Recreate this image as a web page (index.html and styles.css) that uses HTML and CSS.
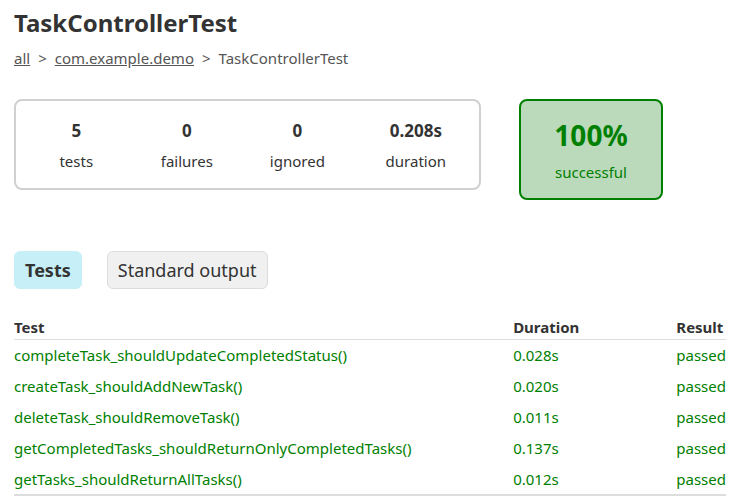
FILE: index.html
```html
<!DOCTYPE html>
<html>
<head>
<meta charset="utf-8">
<link rel="stylesheet" href="styles.css">
</head>
<body>
<div class="page">
  <h1 class="title">TaskControllerTest</h1>
  <div class="breadcrumbs">
    <a href="#">all</a><span class="sep">&gt;</span><a href="#">com.example.demo</a><span class="sep">&gt;</span><span>TaskControllerTest</span>
  </div>
  <div class="summary-row">
    <div class="summary">
      <div class="stat"><div class="num">5</div><div class="lbl">tests</div></div>
      <div class="stat"><div class="num">0</div><div class="lbl">failures</div></div>
      <div class="stat"><div class="num">0</div><div class="lbl">ignored</div></div>
      <div class="stat"><div class="num">0.208s</div><div class="lbl">duration</div></div>
    </div>
    <div class="success">
      <div class="pct">100%</div>
      <div class="slbl">successful</div>
    </div>
  </div>
  <div class="tabs">
    <div class="tab active">Tests</div>
    <div class="tab">Standard output</div>
  </div>
  <table class="tests">
    <thead>
      <tr><th class="c-test">Test</th><th class="c-dur">Duration</th><th class="c-res">Result</th></tr>
    </thead>
    <tbody>
      <tr><td>completeTask_shouldUpdateCompletedStatus()</td><td>0.028s</td><td>passed</td></tr>
      <tr><td>createTask_shouldAddNewTask()</td><td>0.020s</td><td>passed</td></tr>
      <tr><td>deleteTask_shouldRemoveTask()</td><td>0.011s</td><td>passed</td></tr>
      <tr><td>getCompletedTasks_shouldReturnOnlyCompletedTasks()</td><td>0.137s</td><td>passed</td></tr>
      <tr><td>getTasks_shouldReturnAllTasks()</td><td>0.012s</td><td>passed</td></tr>
    </tbody>
  </table>
</div>
</body>
</html>
```

FILE: styles.css
```css
html, body {
  margin: 0;
  padding: 0;
  background: #fff;
}
body {
  font-family: "Noto Sans", "Open Sans", sans-serif;
  color: #333;
  font-size: 15px;
}
.page {
  padding: 6px 12px 0 14px;
}
.title {
  margin: 0;
  font-size: 24px;
  font-weight: 700;
  line-height: 34px;
  color: #333;
}
.breadcrumbs {
  margin-top: 8px;
  font-size: 15px;
  line-height: 20px;
  color: #555;
}
.breadcrumbs a {
  color: #555;
  text-decoration: underline;
}
.sep {
  margin: 0 8px;
}
.summary-row {
  display: flex;
  align-items: flex-start;
  margin-top: 31px;
  gap: 38px;
}
.summary {
  box-sizing: border-box;
  width: 467px;
  height: 91px;
  border: 2px solid #d0d0d0;
  border-radius: 8px;
  display: flex;
  padding: 1px 0 0 5px;
  align-items: center;
}
.stat {
  width: 112px;
  text-align: center;
}
.stat:last-child {
  width: 128px;
}
.num {
  font-weight: 700;
  font-size: 17px;
  line-height: 24px;
}
.lbl {
  margin-top: 8px;
  font-size: 15px;
  line-height: 20px;
}
.success {
  box-sizing: border-box;
  width: 144px;
  height: 101px;
  border: 2px solid #008000;
  border-radius: 8px;
  background: #bbd9bb;
  color: #008000;
  display: flex;
  flex-direction: column;
  align-items: center;
  justify-content: center;
}
.pct {
  font-weight: 700;
  font-size: 28px;
  line-height: 36px;
}
.slbl {
  margin-top: 9px;
  font-size: 15px;
  line-height: 20px;
}
.tabs {
  display: flex;
  gap: 25px;
  margin-top: 51px;
}
.tab {
  box-sizing: border-box;
  height: 38px;
  padding: 0 10px;
  border: 1px solid #dcdcdc;
  border-radius: 6px;
  background: #f0f0f0;
  font-size: 18px;
  line-height: 36px;
  color: #333;
}
.tab.active {
  background: #c6eff7;
  border-color: #c6eff7;
  font-weight: 700;
}
.tests {
  width: 712px;
  margin-top: 28px;
  border-collapse: collapse;
  border-bottom: 2px solid #ddd;
}
.tests th {
  text-align: left;
  font-weight: 700;
  font-size: 15px;
  line-height: 20px;
  padding: 0 0 2px 0;
  border-bottom: 1px solid #ddd;
}
.tests td {
  font-size: 15px;
  line-height: 20px;
  height: 20px;
  padding: 5px 0 6px 0;
  color: #008000;
}
.tests tbody tr:last-child td {
  padding-bottom: 5px;
}
.c-test { width: 500px; }
.c-dur { width: 164px; }
```
